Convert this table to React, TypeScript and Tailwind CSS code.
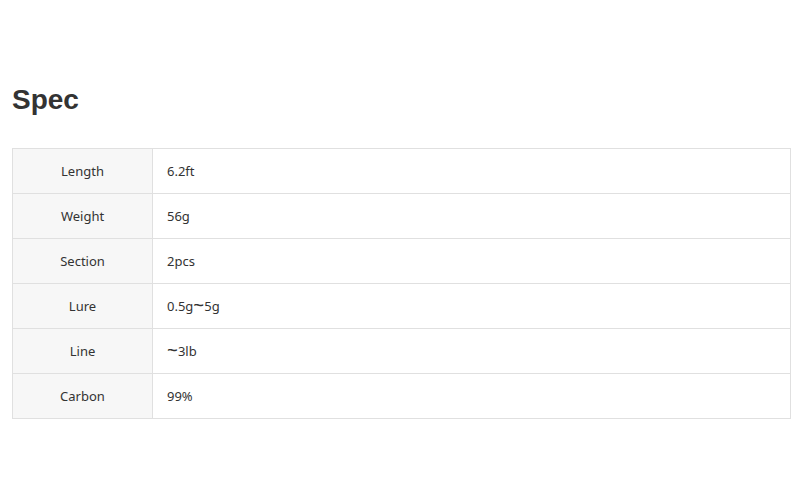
const specs = [
  { label: "Length", value: "6.2ft" },
  { label: "Weight", value: "56g" },
  { label: "Section", value: "2pcs" },
  { label: "Lure", value: ["0.5g", "5g"] },
  { label: "Line", value: ["", "3lb"] },
  { label: "Carbon", value: "99%" },
];

function Value({ v }: { v: string | string[] }) {
  if (typeof v === "string") return <>{v}</>;
  return (
    <>
      {v[0]}
      <span className="text-[19px] leading-[0] align-[-1px]">~</span>
      {v[1]}
    </>
  );
}

export default function App() {
  return (
    <div className="w-[800px] h-[497px] bg-white px-3 pt-[82px]">
      <h2 className="font-['Liberation_Sans',Arial,sans-serif] text-[28px] font-bold leading-[36px] text-[#333]">
        Spec
      </h2>
      <table className="mt-[30px] w-[779px] border-collapse border border-[#dcdcdc] font-['Noto_Sans','Open_Sans',sans-serif] text-[13px] text-[#333]">
        <tbody>
          {specs.map((s) => (
            <tr key={s.label} className="h-[45px]">
              <th className="w-[140px] border border-[#e0e0e0] bg-[#f7f7f7] pt-[2px] text-center font-normal">
                {s.label}
              </th>
              <td className="border border-[#e0e0e0] pl-[14px] pt-[2px]">
                <Value v={s.value} />
              </td>
            </tr>
          ))}
        </tbody>
      </table>
    </div>
  );
}
